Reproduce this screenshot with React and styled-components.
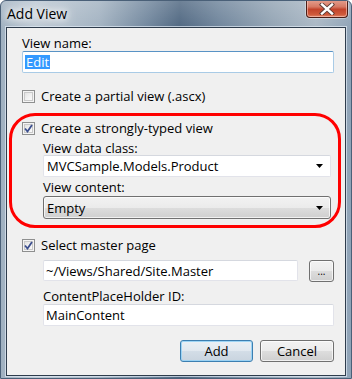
import React from 'react';
import styled, { createGlobalStyle } from 'styled-components';

const Global = createGlobalStyle`
  html, body {
    margin: 0;
    padding: 0;
    background: #ffffff;
  }
  body {
    font-family: "Open Sans", "Noto Sans", sans-serif;
    font-size: 13px;
  }
`;

function CheckMark() {
  return (
    <svg width="9" height="9" viewBox="0 0 9 9">
      <path d="M1 4.5 L3.5 7.5 L8 1" fill="none" stroke="#3c4f8e" strokeWidth="1.8" />
    </svg>
  );
}

function Arrow() {
  return (
    <svg width="8" height="4" viewBox="0 0 8 4">
      <path d="M0 0 H7 L3.5 4 Z" fill="#000" />
    </svg>
  );
}

function CloseGlyph() {
  return (
    <svg width="16" height="12" viewBox="0 0 16 12">
      <path
        d="M3 1.5 L13 10.5 M13 1.5 L3 10.5"
        fill="none"
        stroke="#5a3a35"
        strokeWidth="4.2"
        strokeLinecap="square"
      />
      <path
        d="M3 1.5 L13 10.5 M13 1.5 L3 10.5"
        fill="none"
        stroke="#ffffff"
        strokeWidth="2.4"
        strokeLinecap="square"
      />
    </svg>
  );
}

function CheckRow({ checked, children }) {
  return (
    <Row>
      <Box>{checked ? <CheckMark /> : null}</Box>
      <span>{children}</span>
    </Row>
  );
}

function App() {
  return (
    <>
      <Global />
      <Window>
        <TitleBar>
          <Title>Add View</Title>
          <CloseButton>
            <CloseGlyph />
          </CloseButton>
        </TitleBar>
        <Client>
          <Label $top={8}>View name:</Label>
          <TextBox $focused>
            <Selected>Edit</Selected>
          </TextBox>

          <Spacer $h={16} />
          <CheckRow>Create a partial view (.ascx)</CheckRow>

          <Group>
            <CheckRow checked>Create a strongly-typed view</CheckRow>
            <Indent>
              <Label $top={6}>View data class:</Label>
              <Combo>
                <span>MVCSample.Models.Product</span>
                <Arrow />
              </Combo>
              <Label $top={3}>View content:</Label>
              <DropDown>
                <span>Empty</span>
                <Arrow />
              </DropDown>
            </Indent>
          </Group>

          <Spacer $h={10} />
          <CheckRow checked>Select master page</CheckRow>
          <Indent>
            <BrowseRow>
              <TextBox $h={21} $grow>~/Views/Shared/Site.Master</TextBox>
              <SmallButton>...</SmallButton>
            </BrowseRow>
            <Label $top={7}>ContentPlaceHolder ID:</Label>
            <TextBox>MainContent</TextBox>
          </Indent>

          <Buttons>
            <PushButton $default>Add</PushButton>
            <PushButton>Cancel</PushButton>
          </Buttons>
        </Client>
      </Window>
    </>
  );
}

const Window = styled.div`
  box-sizing: border-box;
  width: 352px;
  height: 379px;
  display: flex;
  flex-direction: column;
  border: 1px solid #4a6078;
  border-radius: 6px 6px 0 0;
  background:
    linear-gradient(180deg, rgba(255, 255, 255, 0.18) 0%, rgba(255, 255, 255, 0) 30px),
    linear-gradient(
      90deg,
      #9fb0c0 0%,
      #bcc8d3 10%,
      #a2b2c1 28%,
      #6f859c 42%,
      #4e6680 51%,
      #6d839a 62%,
      #93a4b4 78%,
      #a9b7c4 90%,
      #8ea2b6 100%
    );
  overflow: hidden;
`;

const TitleBar = styled.div`
  height: 26px;
  flex: none;
  display: flex;
  align-items: flex-start;
  justify-content: space-between;
  padding: 0 3px 0 6px;
`;

const Title = styled.div`
  margin-top: 4px;
  font-size: 14px;
  line-height: 17px;
  color: #000;
  text-shadow: 0 0 6px #fff, 0 0 10px #fff, 0 0 14px rgba(255, 255, 255, 0.9);
`;

const CloseButton = styled.div`
  margin-top: -1px;
  width: 42px;
  height: 18px;
  box-sizing: border-box;
  display: flex;
  align-items: center;
  justify-content: center;
  border: 1px solid #4b1d16;
  border-top: none;
  border-radius: 0 0 4px 4px;
  background: linear-gradient(180deg, #e4a08f 0%, #d67964 40%, #c2432b 55%, #cf5a3b 85%, #e0866a 100%);
  box-shadow: inset 0 0 0 1px rgba(255, 210, 200, 0.55), 0 0 0 1px rgba(255, 255, 255, 0.35);
`;

const Client = styled.div`
  flex: 1;
  margin: 0 5px 2px 5px;
  border: 1px solid #2e3c4c;
  box-shadow: 0 0 0 1px rgba(225, 235, 245, 0.7);
  background: #f0f0f0;
  padding: 0 11px 0 15px;
  display: flex;
  flex-direction: column;
  color: #000;
`;

const Label = styled.div`
  margin-top: ${(p) => p.$top || 0}px;
  line-height: 14px;
  height: 14px;
  white-space: nowrap;
`;

const Spacer = styled.div`
  height: ${(p) => p.$h}px;
  flex: none;
`;

const TextBox = styled.div`
  box-sizing: border-box;
  flex: ${(p) => (p.$grow ? '1' : 'none')};
  height: ${(p) => p.$h || 22}px;
  margin-top: ${(p) => (p.$grow ? 0 : 1)}px;
  display: flex;
  align-items: center;
  padding: 0 2px;
  background: #fff;
  border: 1px solid ${(p) => (p.$focused ? '#a9cbe6' : '#e2e3ea')};
  border-top-color: ${(p) => (p.$focused ? '#5993c5' : '#d5d8df')};
  border-radius: 2px;
  white-space: nowrap;
`;

const Selected = styled.span`
  background: #3399ff;
  color: #fff;
  line-height: 14px;
  padding: 0 1px;
`;

const Row = styled.div`
  display: flex;
  align-items: center;
  gap: 6px;
  height: 14px;
  line-height: 14px;
  white-space: nowrap;
`;

const Box = styled.div`
  box-sizing: border-box;
  width: 13px;
  height: 13px;
  flex: none;
  border: 1px solid #8e8f8f;
  background: linear-gradient(135deg, #dcdcdc 0%, #f4f4f4 60%, #ffffff 100%);
  box-shadow: inset 0 0 0 1px #f4f4f4, inset 0 0 0 2px #c9c9c9;
  display: flex;
  align-items: center;
  justify-content: center;
`;

const Group = styled.div`
  margin: 10px -7px 0 -13px;
  border: 3px solid #ff0000;
  border-radius: 26px;
  padding: 5px 7px 6px 10px;
`;

const Indent = styled.div`
  margin-left: 21px;
  display: flex;
  flex-direction: column;
`;

const Combo = styled.div`
  box-sizing: border-box;
  height: 22px;
  display: flex;
  align-items: center;
  justify-content: space-between;
  padding: 0 6px 0 3px;
  background: #fff;
  border: 1px solid #e2e3ea;
  border-top-color: #d5d8df;
  border-radius: 2px;
  white-space: nowrap;
`;

const DropDown = styled.div`
  box-sizing: border-box;
  margin-top: 2px;
  height: 23px;
  display: flex;
  align-items: center;
  justify-content: space-between;
  padding: 0 6px 0 3px;
  border: 1px solid #707070;
  border-radius: 3px;
  background: linear-gradient(180deg, #f2f2f2 0%, #ebebeb 50%, #dddddd 51%, #cfcfcf 100%);
  box-shadow: inset 0 0 0 1px rgba(255, 255, 255, 0.7);
`;

const BrowseRow = styled.div`
  margin-top: 8px;
  display: flex;
  align-items: flex-start;
  gap: 11px;
`;

const SmallButton = styled.div`
  box-sizing: border-box;
  width: 25px;
  height: 22px;
  display: flex;
  align-items: flex-end;
  justify-content: center;
  padding-bottom: 5px;
  font-size: 10px;
  line-height: 10px;
  border: 1px solid #707070;
  border-radius: 3px;
  background: linear-gradient(180deg, #f2f2f2 0%, #ebebeb 50%, #dddddd 51%, #cfcfcf 100%);
  box-shadow: inset 0 0 0 1px rgba(255, 255, 255, 0.7);
`;

const Buttons = styled.div`
  margin-top: 14px;
  display: flex;
  justify-content: flex-end;
  gap: 7px;
`;

const PushButton = styled.div`
  box-sizing: border-box;
  width: ${(p) => (p.$default ? 73 : 74)}px;
  height: 22px;
  display: flex;
  align-items: center;
  justify-content: center;
  border: 1px solid ${(p) => (p.$default ? '#3c7fb1' : '#707070')};
  border-radius: 3px;
  background: ${(p) =>
    p.$default
      ? 'linear-gradient(180deg, #eaf0f5 0%, #e1e8ef 50%, #d3dde7 51%, #c9d4df 100%)'
      : 'linear-gradient(180deg, #f2f2f2 0%, #ebebeb 50%, #dddddd 51%, #cfcfcf 100%)'};
  box-shadow: inset 0 0 0 1px ${(p) => (p.$default ? 'rgba(150, 210, 245, 0.9)' : 'rgba(255, 255, 255, 0.7)')};
`;

export default App;
